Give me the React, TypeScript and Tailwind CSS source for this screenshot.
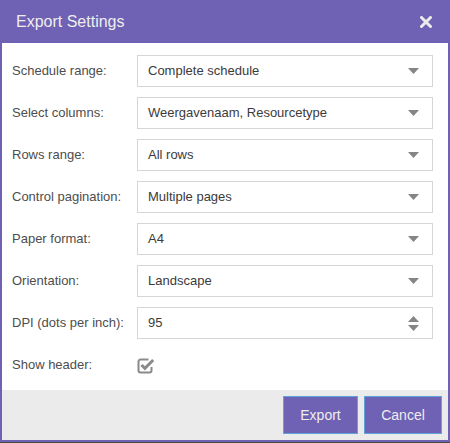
import React from 'react';

const font = { fontFamily: '"Liberation Sans", Arial, sans-serif' };

const Caret = () => (
  <svg width="11" height="6" viewBox="0 0 11 6" className="shrink-0">
    <path d="M0 0h11L5.5 6z" fill="#858585" />
  </svg>
);

const Spinner = () => (
  <div className="flex flex-col items-center gap-[3px]">
    <svg width="11" height="6" viewBox="0 0 11 6">
      <path d="M0 6h11L5.5 0z" fill="#858585" />
    </svg>
    <svg width="11" height="6" viewBox="0 0 11 6">
      <path d="M0 0h11L5.5 6z" fill="#858585" />
    </svg>
  </div>
);

const CheckIcon = () => (
  <svg width="18" height="17" viewBox="0 0 18 17">
    <path
      d="M11.5 2.5H3.5a2 2 0 0 0-2 2v9a2 2 0 0 0 2 2h9a2 2 0 0 0 2-2V10"
      fill="none"
      stroke="#8a8a8a"
      strokeWidth="2"
    />
    <path d="M4.5 8l3.4 3.4L16.2 3" fill="none" stroke="#8a8a8a" strokeWidth="3" />
  </svg>
);

interface FieldProps {
  label: string;
  value?: string;
  kind?: 'select' | 'number' | 'check';
}

const Field: React.FC<FieldProps> = ({ label, value, kind = 'select' }) => (
  <div className="flex items-center h-8">
    <div className="w-[125px] shrink-0 text-[13px] text-[#4d4d4d]">{label}</div>
    {kind === 'check' ? (
      <div className="flex items-center h-8">
        <CheckIcon />
      </div>
    ) : (
      <div className="flex items-center justify-between w-[296px] h-8 border border-[#d6d6d6] bg-white pl-[10px] pr-[13px]">
        <span className="text-[13px] text-[#3b3b3b]">{value}</span>
        {kind === 'number' ? <Spinner /> : <Caret />}
      </div>
    )}
  </div>
);

export default function App() {
  return (
    <div className="w-[450px] h-[443px] bg-[#4a4744]" style={font}>
      <div className="w-[450px] h-[442px] flex flex-col bg-[#6f61b3] px-[2px] pb-[2px]">
        <div className="h-[43px] flex items-center justify-between pl-[14px] pr-[16px] shrink-0">
          <span className="text-[16px] text-[#eeeeee]">Export Settings</span>
          <svg width="12" height="12" viewBox="0 0 12 12">
            <path d="M1.5 1.5l9 9M10.5 1.5l-9 9" stroke="#ececec" strokeWidth="3" strokeLinecap="round" />
          </svg>
        </div>
        <div className="flex flex-col gap-[10px] bg-white pl-[10px] pt-[12px] pb-[9px]">
          <Field label="Schedule range:" value="Complete schedule" />
          <Field label="Select columns:" value="Weergavenaam, Resourcetype" />
          <Field label="Rows range:" value="All rows" />
          <Field label="Control pagination:" value="Multiple pages" />
          <Field label="Paper format:" value="A4" />
          <Field label="Orientation:" value="Landscape" />
          <Field label="DPI (dots per inch):" value="95" kind="number" />
          <Field label="Show header:" kind="check" />
        </div>
        <div className="flex-1 flex items-center justify-end gap-[6px] bg-[#ebebeb] pr-[6px]">
          <button className="w-[75px] h-[38px] bg-[#6f61b3] border border-[#5ea3dc] text-[14px] text-[#eeeeee]">
            Export
          </button>
          <button className="w-[78px] h-[38px] bg-[#6f61b3] border border-[#5ea3dc] text-[14px] text-[#eeeeee]">
            Cancel
          </button>
        </div>
      </div>
    </div>
  );
}
